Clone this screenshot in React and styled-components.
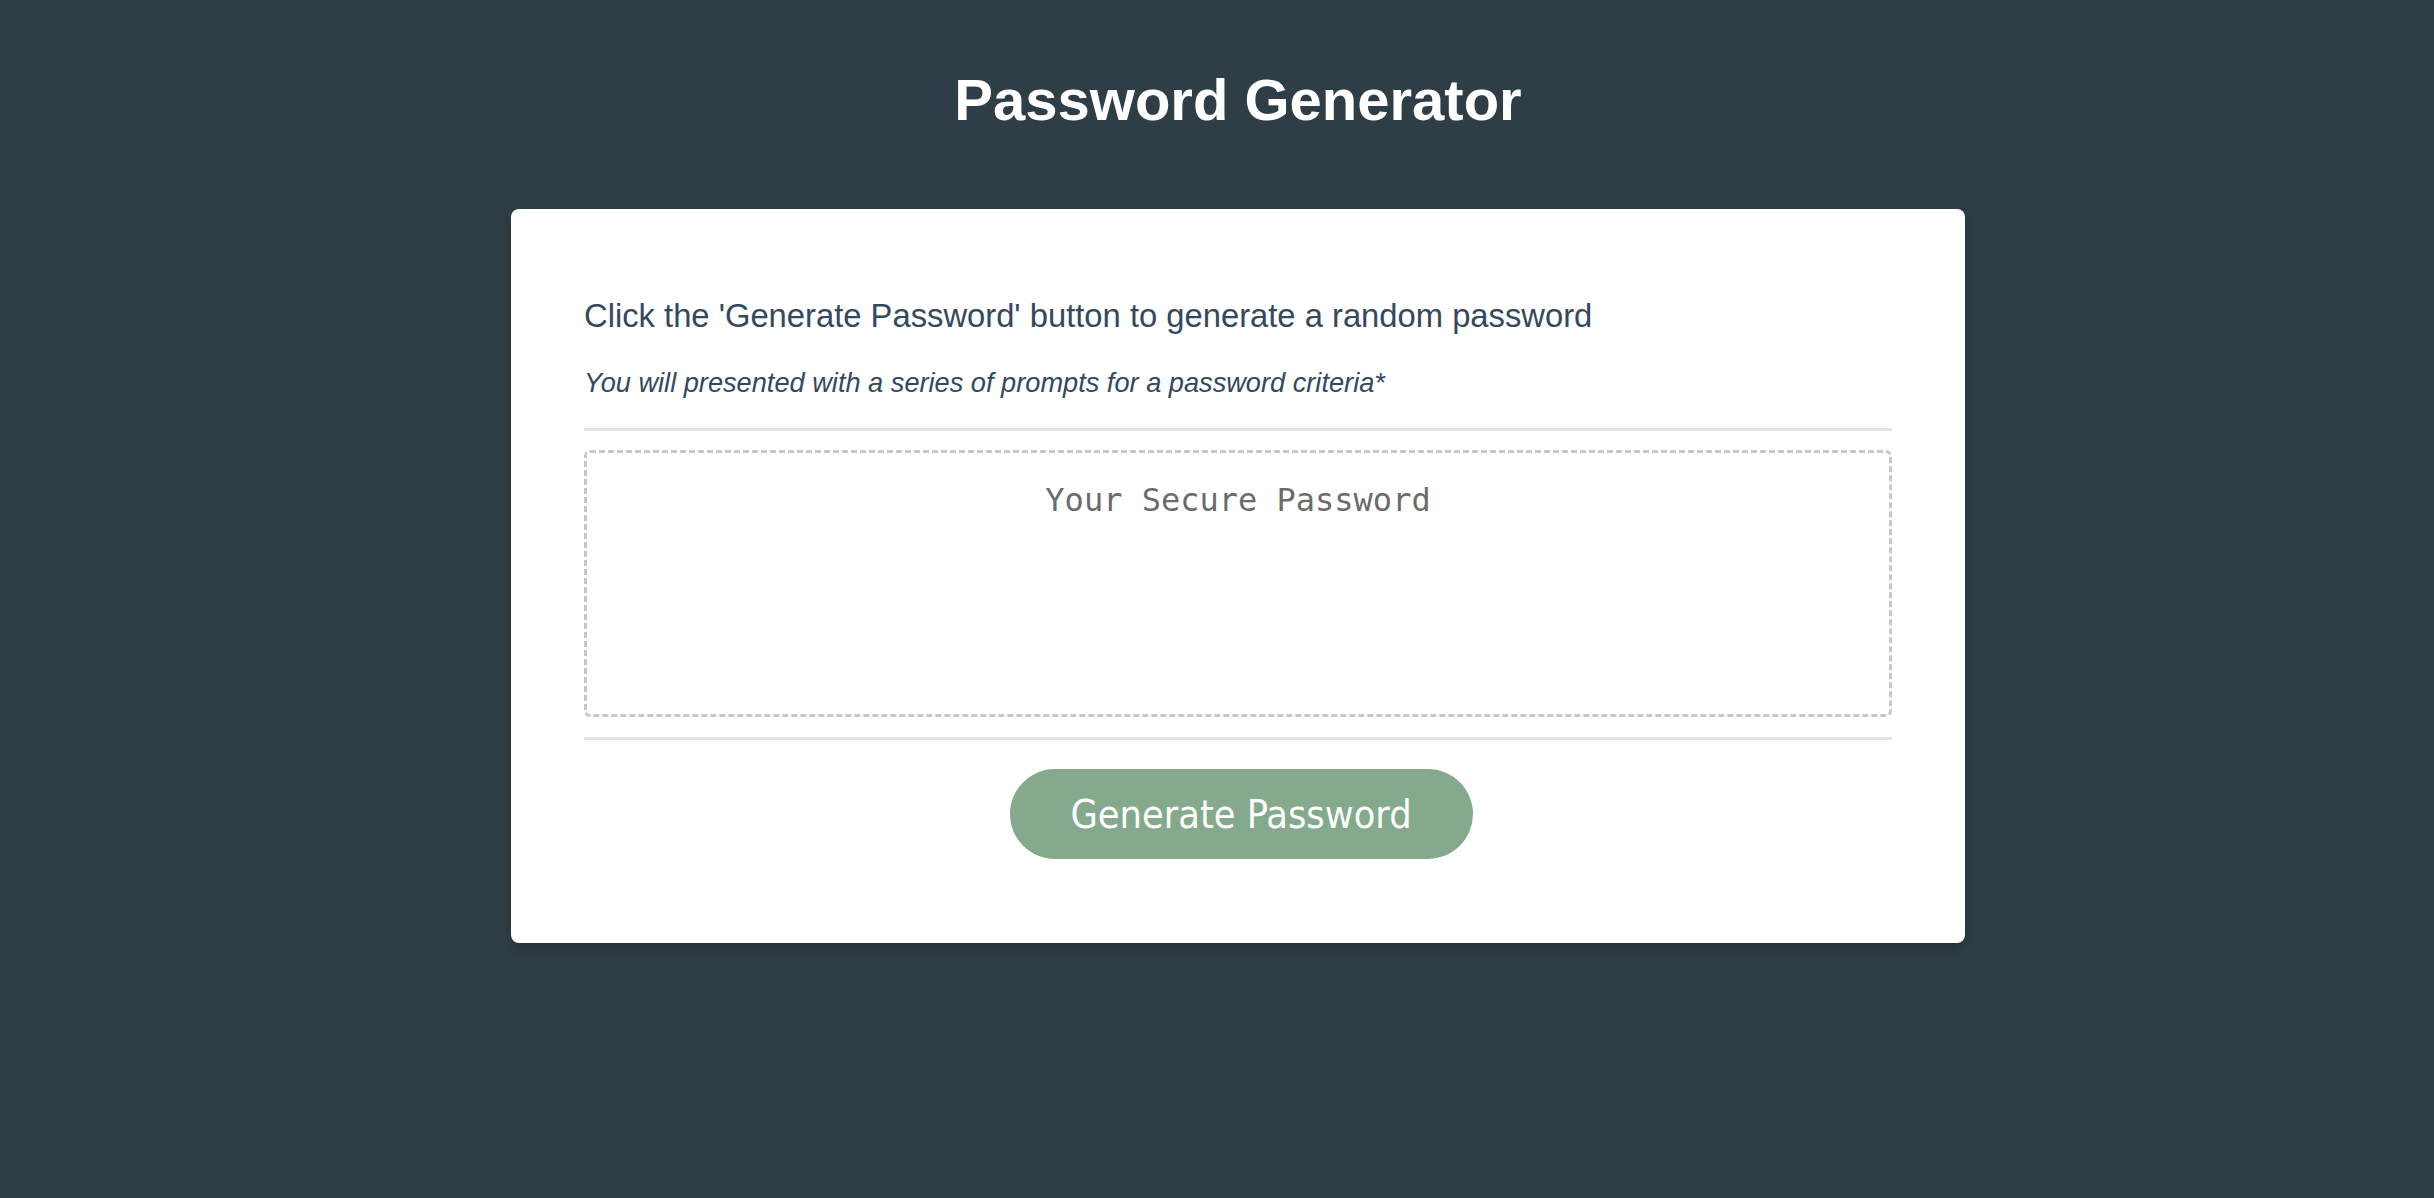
import React from "react";
import styled, { createGlobalStyle } from "styled-components";

const GlobalStyle = createGlobalStyle`
  html, body {
    margin: 0;
    padding: 0;
    background: #2f3e46;
  }
  body {
    font-family: "Liberation Sans", Arial, sans-serif;
    color: #34495e;
  }
  * { box-sizing: border-box; }
`;

const Page = styled.div`
  min-height: 1198px;
  display: flex;
  flex-direction: column;
  align-items: center;
  padding: 66px 0 0 42px;
  background: #2f3e46;
`;

const Title = styled.h1`
  margin: 0;
  font-family: "Liberation Sans", Arial, sans-serif;
  font-weight: 700;
  font-size: 58px;
  line-height: 67px;
  color: #ffffff;
  text-align: center;
`;

const Card = styled.main`
  margin-top: 76px;
  width: 1454px;
  background: #ffffff;
  border-radius: 8px;
  padding: 88px 73px 84px;
  box-shadow: 0 6px 14px rgba(0, 0, 0, 0.22);
  display: flex;
  flex-direction: column;
`;

const Lead = styled.p`
  margin: 0;
  font-size: 32.75px;
  line-height: 37.5px;
  color: #34495e;
`;

const Note = styled.p`
  margin: 32.5px 0 0;
  font-size: 27.2px;
  line-height: 31.25px;
  font-style: italic;
  color: #34495e;
`;

const Rule = styled.hr`
  margin: ${(p) => p.$top}px 0 0;
  border: 0;
  height: 3px;
  background: #e6e6e6;
`;

const Output = styled.textarea`
  display: block;
  margin-top: 19px;
  width: 100%;
  height: 267px;
  resize: none;
  border: 3px dashed #c3c7ce;
  border-radius: 6px;
  padding: 29px 20px;
  font-family: "DejaVu Sans Mono", monospace;
  font-size: 32px;
  line-height: 37px;
  text-align: center;
  color: #34495e;
  background: #ffffff;
  outline: none;

  &::placeholder {
    color: #6b6b6b;
  }
`;

const Actions = styled.div`
  display: flex;
  justify-content: center;
  margin-top: 29px;
  padding-left: 6px;
`;

const GenerateButton = styled.button`
  width: 463px;
  height: 90px;
  border: 0;
  border-radius: 45px;
  background: #84a98c;
  color: #ffffff;
  font-family: "DejaVu Sans Condensed", "DejaVu Sans", sans-serif;
  font-stretch: condensed;
  font-size: 39.3px;
  line-height: 1;
  padding: 0;
  cursor: pointer;
  display: flex;
  align-items: center;
  justify-content: center;
`;

export default function App() {
  return (
    <>
      <GlobalStyle />
      <Page>
        <Title>Password Generator</Title>
        <Card>
          <Lead>Click the 'Generate Password' button to generate a random password</Lead>
          <Note>You will presented with a series of prompts for a password criteria*</Note>
          <Rule $top={30} />
          <Output readOnly placeholder="Your Secure Password" aria-label="Generated Password" />
          <Rule $top={20} />
          <Actions>
            <GenerateButton type="button">Generate Password</GenerateButton>
          </Actions>
        </Card>
      </Page>
    </>
  );
}
